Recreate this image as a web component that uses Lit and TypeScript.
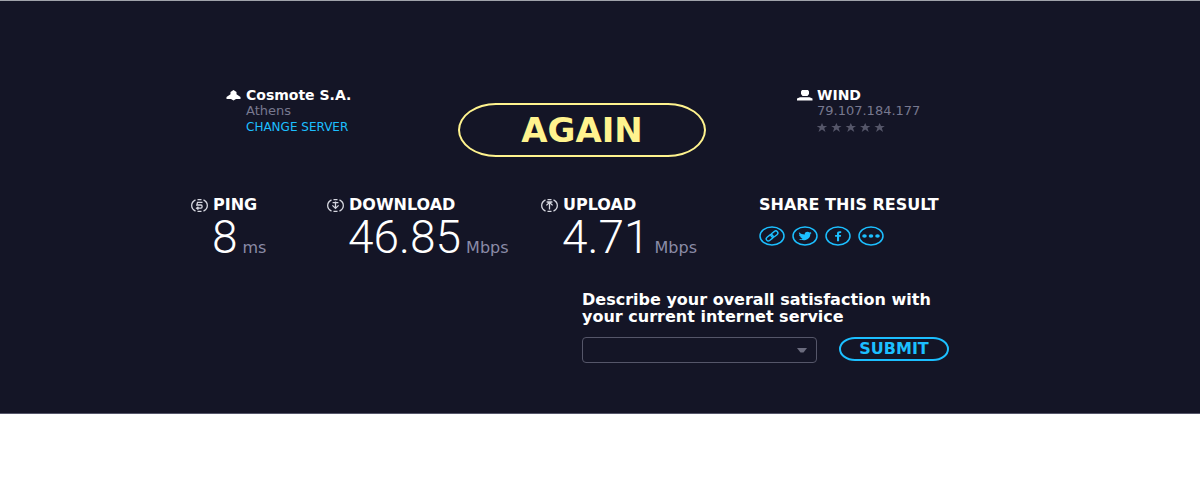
import { LitElement, html, css, svg } from "lit";
import { customElement } from "lit/decorators.js";

const metricIcons: Record<string, unknown> = {
  ping: svg`<path d="M11.500 3.300H6.500L5.800 6h4.200c1.500 0 1.500 3.200 0 3.200H5.500M7.400 7.800 5.600 9.200 7.400 10.600" />`,
  download: svg`<path d="M8.500 2.600v6.600M5.400 6.400l3.100 3 3.100-3M5.600 3.600h5.800" />`,
  upload: svg`<path d="M8.500 10.600V4M5.400 6.400l3.100-3 3.100 3M5.600 3h5.800" />`,
};

const shareLinks = [
  {
    name: "Copy link",
    icon: svg`<g fill="none" stroke="currentColor" stroke-width="1.400">
      <rect x="11.600" y="6" width="7.600" height="4.200" rx="2.100" transform="rotate(-38 15.400 8.100)" />
      <rect x="6.900" y="9.700" width="7.600" height="4.200" rx="2.100" transform="rotate(-38 10.700 11.800)" /></g>`,
  },
  {
    name: "Twitter",
    icon: svg`<path fill="currentColor" d="M7 6.3c1.6 1.5 3.4 2.1 5.700 2.200C12.500 6.800 13.800 5.800 15.500 5.800c.9 0 1.500.2 2.100.7l1.700-.5-.7 1.200 1-.1-1.300 1.200c0 3.600-3 6-6.600 6-1.900 0-3.700-.4-5-1.200 1.600.1 2.900-.2 3.900-.9-1.200-.1-2-.6-2.500-1.500h1.100C7.900 10.300 7 9.500 7 8.400l1.100.2C7 7.900 6.700 7.100 7 6.300Z" />`,
  },
  {
    name: "Facebook",
    icon: svg`<path fill="currentColor" d="M12 15.300V10.700h-1.900V8.900H12V7.600c0-1.600 1-2.400 2.700-2.400h1.500v1.700h-1.100c-.8 0-1 .3-1 .8v1.200h2l-.3 1.800h-1.700v4.600Z" />`,
  },
  {
    name: "More",
    icon: svg`<g fill="currentColor"><ellipse cx="6.500" cy="10" rx="2.300" ry="1.700" /><ellipse cx="13" cy="10" rx="2.300" ry="1.700" /><ellipse cx="19.500" cy="10" rx="2.300" ry="1.700" /></g>`,
  },
];

const metrics = [
  { id: "ping", label: "PING", value: "8", unit: "ms" },
  { id: "download", label: "DOWNLOAD", value: "46.85", unit: "Mbps" },
  { id: "upload", label: "UPLOAD", value: "4.71", unit: "Mbps" },
];

@customElement("app-root")
export class AppRoot extends LitElement {
  static styles = css`
    :host {
      display: block;
      background: #fff;
      font-family: "DejaVu Sans", sans-serif;
      font-size: 13px;
      line-height: 16px;
      color: #fff;
    }
    * { box-sizing: border-box; }
    h2, p { margin: 0; }
    svg { display: block; flex: none; }
    button { font: inherit; background: none; cursor: pointer; padding: 0; }
    .hero {
      background: #141526;
      border-top: 1px solid #a0a3aa;
      border-bottom: 1px solid #55566a;
      padding: 86px 16px 50px;
    }
    .wrap { max-width: 820px; margin: 0 auto; }
    .top {
      display: grid;
      grid-template-columns: 232fr 339fr 213fr;
      padding-left: 36px;
    }
    .party { display: grid; grid-template-columns: 16px auto; column-gap: 4px; align-content: start; justify-content: start; }
    .party svg { margin-top: 3px; }
    .name { font-size: 14px; font-weight: 700; line-height: 16px; }
    .sub { color: #77788f; line-height: 16px; }
    .change { display: block; font-size: 12px; color: #1cbfff; text-decoration: none; line-height: 16px; }
    .party .stars { color: #555669; margin-top: 4px; }
    .again {
      margin-top: 16px;
      width: 248px;
      height: 54px;
      border: 2px solid #fff38e;
      border-radius: 38px / 27px;
      color: #fff38e;
      font-size: 34px;
      font-weight: 700;
    }
    .results {
      display: grid;
      grid-template-columns: 136fr 214fr 218fr 251fr;
      margin-top: 40px;
      padding-left: 1px;
    }
    .head { display: flex; align-items: center; gap: 5px; height: 16px; }
    .label { font-size: 16px; font-weight: 700; line-height: 16px; }
    .reading { display: flex; align-items: baseline; gap: 5px; padding-left: 21px; line-height: 48px; }
    .value { font-family: Roboto, sans-serif; font-weight: 300; font-size: 46px; }
    .unit { font-size: 16px; color: #8a8ba6; }
    .share { display: flex; gap: 7px; margin-top: 13px; }
    .share a { color: #1cbfff; }
    .survey { margin: 19px 0 0 392px; }
    .question { display: block; font-size: 16px; font-weight: 700; line-height: 17px; max-width: 370px; }
    .controls { display: flex; gap: 22px; margin-top: 12px; }
    .picker { position: relative; width: 235px; }
    .picker select {
      appearance: none;
      display: block;
      width: 100%;
      height: 26px;
      background: transparent;
      border: 1px solid #555669;
      border-radius: 4px;
      color: #fff;
      font: inherit;
      padding: 0 28px 0 8px;
    }
    .picker svg { position: absolute; right: 10px; top: 11px; pointer-events: none; }
    .submit {
      width: 110px;
      height: 24px;
      border: 2px solid #1cbfff;
      border-radius: 16px / 12px;
      color: #1cbfff;
      font-size: 16px;
      font-weight: 700;
      line-height: 16px;
    }
  `;

  render() {
    return html`
      <main class="hero">
        <div class="wrap">
          <section class="top">
            <div class="party">
              <svg width="16" height="11" viewBox="0 0 16 11" aria-hidden="true">
                <path fill="#fff" d="M7.500 0 10.500 2v2.200L14.500 7v2H10l-2.500 1.500L5 9H.5V7l4-2.800V2Z" />
              </svg>
              <div>
                <h2 class="name">Cosmote S.A.</h2>
                <p class="sub">Athens</p>
                <a class="change" href="#servers">CHANGE SERVER</a>
              </div>
            </div>
            <button class="again">AGAIN</button>
            <div class="party">
              <svg width="16" height="11" viewBox="0 0 16 11" aria-hidden="true">
                <path fill="#fff" d="M5 0h6l1 1.500v2.500L10.500 6h-5L4 4V1.500ZM0 10.500V8.500L3 7.200h9.500l3 1.300v2Z" />
              </svg>
              <div>
                <h2 class="name">WIND</h2>
                <p class="sub">79.107.184.177</p>
                <svg class="stars" width="70" height="9" viewBox="0 0 70 9" role="img" aria-label="Not rated">
                  ${[0, 1, 2, 3, 4].map(
                    (i) => svg`<path fill="currentColor" transform="translate(${i * 14.4} 0)"
                      d="M5 0 6.400 3H10.200L7.200 5.100 8.500 9 5 6.600 1.500 9 2.800 5.100-.2 3H3.600Z" />`
                  )}
                </svg>
              </div>
            </div>
          </section>

          <section class="results">
            ${metrics.map(
              (m) => html`
                <div>
                  <div class="head">
                    <svg width="17" height="13" viewBox="0 0 17 13" fill="none" stroke="#d5d6df" stroke-width="1.300" aria-hidden="true">
                      <path d="M4.500.9C-.6 3.500-.6 9.500 4.500 12.100M12.500.9c5.100 2.600 5.100 8.600 0 11.200M6.500.7h4M6.500 12.300h4" />
                      ${metricIcons[m.id]}
                    </svg>
                    <h2 class="label">${m.label}</h2>
                  </div>
                  <div class="reading">
                    <span class="value">${m.value}</span><span class="unit">${m.unit}</span>
                  </div>
                </div>
              `
            )}
            <div>
              <h2 class="label">SHARE THIS RESULT</h2>
              <nav class="share">
                ${shareLinks.map(
                  (s) => html`
                    <a href="#share" aria-label=${s.name}>
                      <svg width="26" height="20" viewBox="0 0 26 20">
                        <ellipse cx="13" cy="10" rx="12" ry="9" fill="none" stroke="currentColor" stroke-width="1.500" />
                        ${s.icon}
                      </svg>
                    </a>
                  `
                )}
              </nav>
            </div>
          </section>

          <form class="survey" @submit=${(e: Event) => e.preventDefault()}>
            <label class="question" for="rating">Describe your overall satisfaction with<br />your current internet service</label>
            <div class="controls">
              <div class="picker">
                <select id="rating"><option></option></select>
                <svg width="10" height="5" viewBox="0 0 10 5" aria-hidden="true"><path fill="#6a6b7d" d="M0 0h10L6.500 4.500h-3Z" /></svg>
              </div>
              <button class="submit">SUBMIT</button>
            </div>
          </form>
        </div>
      </main>
    `;
  }
}
